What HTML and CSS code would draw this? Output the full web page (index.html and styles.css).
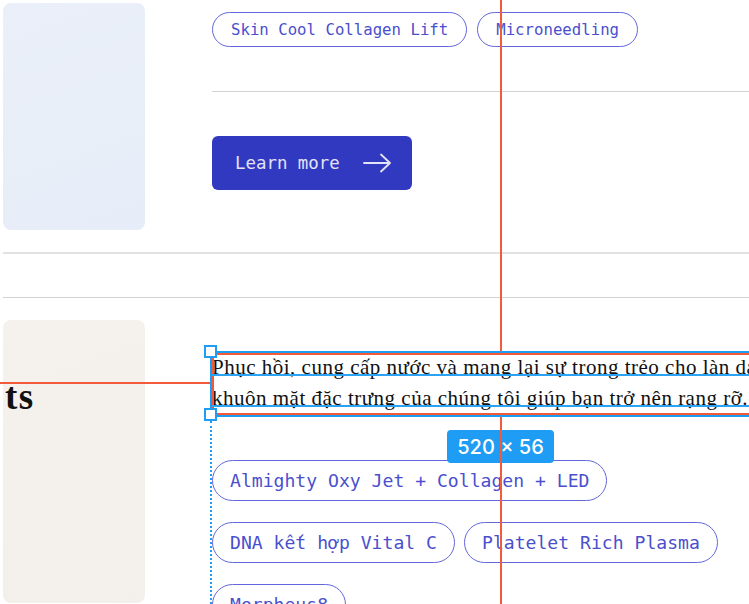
FILE: index.html
```html
<!DOCTYPE html>
<html lang="vi">
<head>
<meta charset="utf-8">
<title>Treatments</title>
<link rel="stylesheet" href="styles.css">
</head>
<body>
<div class="page">
  <section class="row row-top">
    <div class="card card-blue"></div>
    <div class="content">
      <div class="pills pills-sm">
        <span class="pill">Skin Cool Collagen Lift</span>
        <span class="pill">Microneedling</span>
      </div>
      <div class="divider"></div>
      <a class="btn" href="#">
        <span>Learn more</span>
        <svg class="arrow" width="28" height="20" viewBox="0 0 28 20" fill="none" stroke="currentColor" stroke-width="1.8" stroke-linecap="round" stroke-linejoin="round"><path d="M1 10H27M18 1.5L27 10L18 18.5"/></svg>
      </a>
    </div>
  </section>
  <div class="rule rule-thick"></div>
  <div class="rule rule-thin"></div>
  <section class="row row-bottom">
    <div class="card card-beige"><h2 class="card-title">ts</h2></div>
    <div class="content content-bottom">
      <p class="lead">Phục hồi, cung cấp nước và mang lại sự trong trẻo cho làn da với<br>khuôn mặt đặc trưng của chúng tôi giúp bạn trở nên rạng rỡ.</p>
      <div class="pills pills-lg">
        <span class="pill">Almighty Oxy Jet + Collagen + LED</span>
        <span class="pill">DNA kết hợp Vital C</span>
        <span class="pill">Platelet Rich Plasma</span>
        <span class="pill">Morpheus8</span>
      </div>
    </div>
  </section>
</div>

<div class="overlay">
  <div class="guide-v guide-v-top"></div>
  <div class="guide-v guide-v-bottom"></div>
  <div class="guide-h"></div>
  <div class="sel-box"></div>
  <div class="measure-box"></div>
  <div class="baseline baseline-1"></div>
  <div class="baseline baseline-2"></div>
  <div class="handle handle-top"></div>
  <div class="handle handle-bottom"></div>
  <div class="dotted"></div>
  <div class="size-badge">520 × 56</div>
  <div class="guide-v guide-v-badge"></div>
</div>
</body>
</html>
```

FILE: styles.css
```css
html, body {
  margin: 0;
  padding: 0;
  background: #ffffff;
}
body {
  width: 749px;
  height: 604px;
  overflow: hidden;
  position: relative;
  font-family: "DejaVu Sans Mono", monospace;
}
.page {
  padding: 3px 0 0 3px;
}
.row {
  display: grid;
  grid-template-columns: 142px 1fr;
  column-gap: 67px;
  align-items: start;
}
.card {
  border-radius: 8px;
}
.card-blue {
  height: 227px;
  background: linear-gradient(160deg, #eaeff9 0%, #e7edf8 100%);
}
.card-beige {
  height: 283px;
  background: linear-gradient(160deg, #f5f2ee 0%, #f3f0eb 100%);
  padding: 57px 0 0 2px;
  box-sizing: border-box;
}
.card-title {
  margin: 0;
  font-family: "Liberation Serif", serif;
  font-weight: 700;
  font-size: 37px;
  line-height: 40px;
  letter-spacing: 1.5px;
  color: #111111;
}
.content {
  padding-top: 9px;
  min-width: 0;
}
.pills {
  display: flex;
  flex-wrap: wrap;
}
.pill {
  display: inline-flex;
  align-items: center;
  box-sizing: border-box;
  border: 1.5px solid #6267db;
  border-radius: 999px;
  color: #4a50cd;
  white-space: nowrap;
}
.pills-sm {
  gap: 10px;
}
.pills-sm .pill {
  height: 35px;
  padding: 0 18px;
  font-size: 15.7px;
}
.pills-lg {
  width: 520px;
  column-gap: 9px;
  row-gap: 21px;
  margin-top: 44px;
}
.pills-lg .pill {
  height: 41px;
  padding: 0 17px;
  font-size: 18.1px;
}
.divider {
  height: 1px;
  background: #d3d3d3;
  margin-top: 44px;
}
.btn {
  margin-top: 44px;
  display: inline-flex;
  align-items: center;
  gap: 23px;
  height: 54px;
  box-sizing: border-box;
  padding: 0 21px 0 23px;
  background: #3239c1;
  border-radius: 6px;
  color: #e2e3f7;
  text-decoration: none;
  font-size: 17.4px;
}
.arrow {
  display: block;
}
.rule-thick {
  height: 2px;
  background: #e2e2e2;
  margin-top: 22px;
}
.rule-thin {
  height: 1px;
  background: #d2d2d2;
  margin-top: 43px;
}
.row-bottom {
  margin-top: 22px;
}
.content-bottom {
  padding-top: 32px;
}
.lead {
  margin: 0;
  font-family: "Liberation Serif", serif;
  font-size: 21px;
  letter-spacing: 0.5px;
  line-height: 31px;
  color: #111111;
  white-space: nowrap;
}
.pills-lg {
  margin-top: 46px;
}

/* inspector overlay */
.overlay {
  position: absolute;
  left: 0;
  top: 0;
  width: 749px;
  height: 604px;
  pointer-events: none;
}
.guide-v {
  position: absolute;
  left: 500px;
  width: 2px;
  background: #f25a3b;
}
.guide-v-top { top: 0; height: 354px; }
.guide-v-bottom { top: 413px; height: 191px; }
.guide-v-badge { top: 430px; height: 33px; }
.guide-h {
  position: absolute;
  left: 0;
  top: 382px;
  width: 212px;
  height: 2px;
  background: #f25a3b;
}
.sel-box {
  position: absolute;
  left: 210px;
  top: 351px;
  width: 600px;
  height: 66px;
  box-sizing: border-box;
  border: 2px solid #1f9cf3;
}
.measure-box {
  position: absolute;
  left: 212px;
  top: 353px;
  width: 600px;
  height: 62px;
  box-sizing: border-box;
  border: 2px solid #f25a3b;
}
.baseline {
  position: absolute;
  left: 212px;
  width: 560px;
  height: 2px;
  background: #2aa3f5;
}
.baseline-1 { top: 374px; }
.baseline-2 { top: 405px; }
.handle {
  position: absolute;
  left: 204px;
  width: 13px;
  height: 13px;
  box-sizing: border-box;
  border: 2px solid #1f9cf3;
  background: #ffffff;
}
.handle-top { top: 345px; }
.handle-bottom { top: 408px; }
.dotted {
  position: absolute;
  left: 210px;
  top: 421px;
  height: 183px;
  border-left: 2px dotted #1f9cf3;
}
.size-badge {
  position: absolute;
  left: 447px;
  top: 430px;
  width: 107px;
  height: 33px;
  border-radius: 4px;
  background: #1f9cf3;
  color: #ffffff;
  font-family: "Inter", "DejaVu Sans", sans-serif;
  font-weight: 500;
  font-size: 20px;
  display: flex;
  align-items: center;
  justify-content: center;
}
```
